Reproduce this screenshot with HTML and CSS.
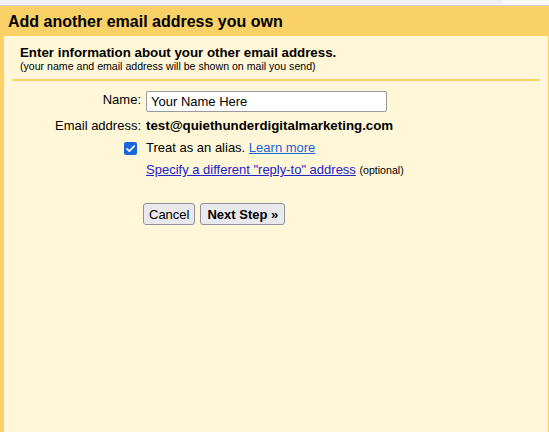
FILE: index.html
```html
<!DOCTYPE html>
<html>
<head>
<meta charset="utf-8">
<link rel="stylesheet" href="styles.css">
</head>
<body>
<div class="page">
  <div class="topbar"><div class="topbar-tab"></div></div>
  <div class="header"><h1 class="header-title">Add another email address you own</h1></div>
  <div class="panel">
    <div class="intro">
      <div class="intro-title">Enter information about your other email address.</div>
      <div class="intro-sub">(your name and email address will be shown on mail you send)</div>
    </div>
    <div class="rule"></div>
    <div class="form">
      <div class="lbl lbl-top">Name:</div>
      <div class="val"><input class="name-input" type="text" value="Your Name Here"></div>

      <div class="lbl">Email address:</div>
      <div class="val val-bold">test@quiethunderdigitalmarketing.com</div>

      <div class="chk-cell"><span class="chk"><svg viewBox="0 0 13 13" width="13" height="13"><path d="M3 6.8 L5.4 9.1 L10.2 4.1" fill="none" stroke="#fff" stroke-width="1.7" stroke-linecap="round" stroke-linejoin="round"/></svg></span></div>
      <div class="val">Treat as an alias. <a class="link-learn" href="#">Learn more</a></div>

      <div class="lbl"></div>
      <div class="val"><a class="link-reply" href="#">Specify a different "reply-to" address</a> <span class="opt">(optional)</span></div>
    </div>
    <div class="buttons">
      <button class="btn">Cancel</button>
      <button class="btn btn-bold">Next Step »</button>
    </div>
  </div>
</div>
</body>
</html>
```

FILE: styles.css
```css
html, body {
  margin: 0;
  padding: 0;
  height: 100%;
}
body {
  font-family: "Liberation Sans", Arial, sans-serif;
  font-size: 13px;
  color: #000;
  background: #f8f8fb;
}
.page {
  display: flex;
  flex-direction: column;
  height: 432px;
}
.topbar {
  height: 5px;
  border-bottom: 1px solid #d2d2d6;
  background: #f8f8fb;
}
.topbar-tab {
  width: 503px;
  height: 5px;
  background: #f1f1f5;
  border-bottom-right-radius: 6px;
}
.header {
  background: #fad166;
  height: 23px;
  padding: 7px 0 0 8px;
}
.header-title {
  margin: 0;
  font-size: 16px;
  line-height: 18px;
  font-weight: bold;
  color: #000;
}
.panel {
  flex: 1;
  background: #fff7d7;
  border-left: 4px solid #fad166;
  border-right: 1px solid #fad166;
}
.intro {
  padding: 9px 0 0 16px;
}
.intro-title {
  font-weight: bold;
  font-size: 13.3px;
  line-height: 15px;
}
.intro-sub {
  font-size: 10.6px;
  line-height: 12px;
}
.rule {
  height: 2px;
  background: #fad166;
  margin: 7px 8px 0 8px;
}
.form {
  margin-top: 10px;
  display: grid;
  grid-template-columns: 137px 1fr;
  column-gap: 5px;
  row-gap: 6px;
  line-height: 16px;
}
.lbl {
  text-align: right;
}
.lbl-top {
  padding-top: 1px;
}
.val-bold {
  font-weight: bold;
  font-size: 13.3px;
}
.name-input {
  display: block;
  box-sizing: border-box;
  width: 241px;
  height: 21px;
  margin: 0;
  padding: 0 4px;
  border: 1px solid #9a9a9a;
  border-radius: 2px;
  background: #fff;
  font-family: "Liberation Sans", Arial, sans-serif;
  font-size: 13px;
  color: #000;
}
.chk-cell {
  display: flex;
  justify-content: flex-end;
  align-items: center;
  padding-right: 4px;
}
.chk {
  display: block;
  width: 13px;
  height: 13px;
  background: #1668dc;
  border-radius: 2px;
}
.chk svg {
  display: block;
}
.link-learn {
  color: #1a64d6;
  text-decoration: underline;
}
.link-reply {
  color: #2222cc;
  text-decoration: underline;
}
.opt {
  font-size: 10.6px;
}
.buttons {
  display: flex;
  gap: 5px;
  margin: 25px 0 0 139px;
}
.btn {
  box-sizing: border-box;
  height: 22px;
  padding: 0 5px;
  margin: 0;
  border: 1px solid #8f8f9d;
  border-radius: 3px;
  background: #e9e9ed;
  font-family: "Liberation Sans", Arial, sans-serif;
  font-size: 13px;
  color: #000;
}
.btn-bold {
  font-weight: bold;
  padding: 0 6px;
}
```
